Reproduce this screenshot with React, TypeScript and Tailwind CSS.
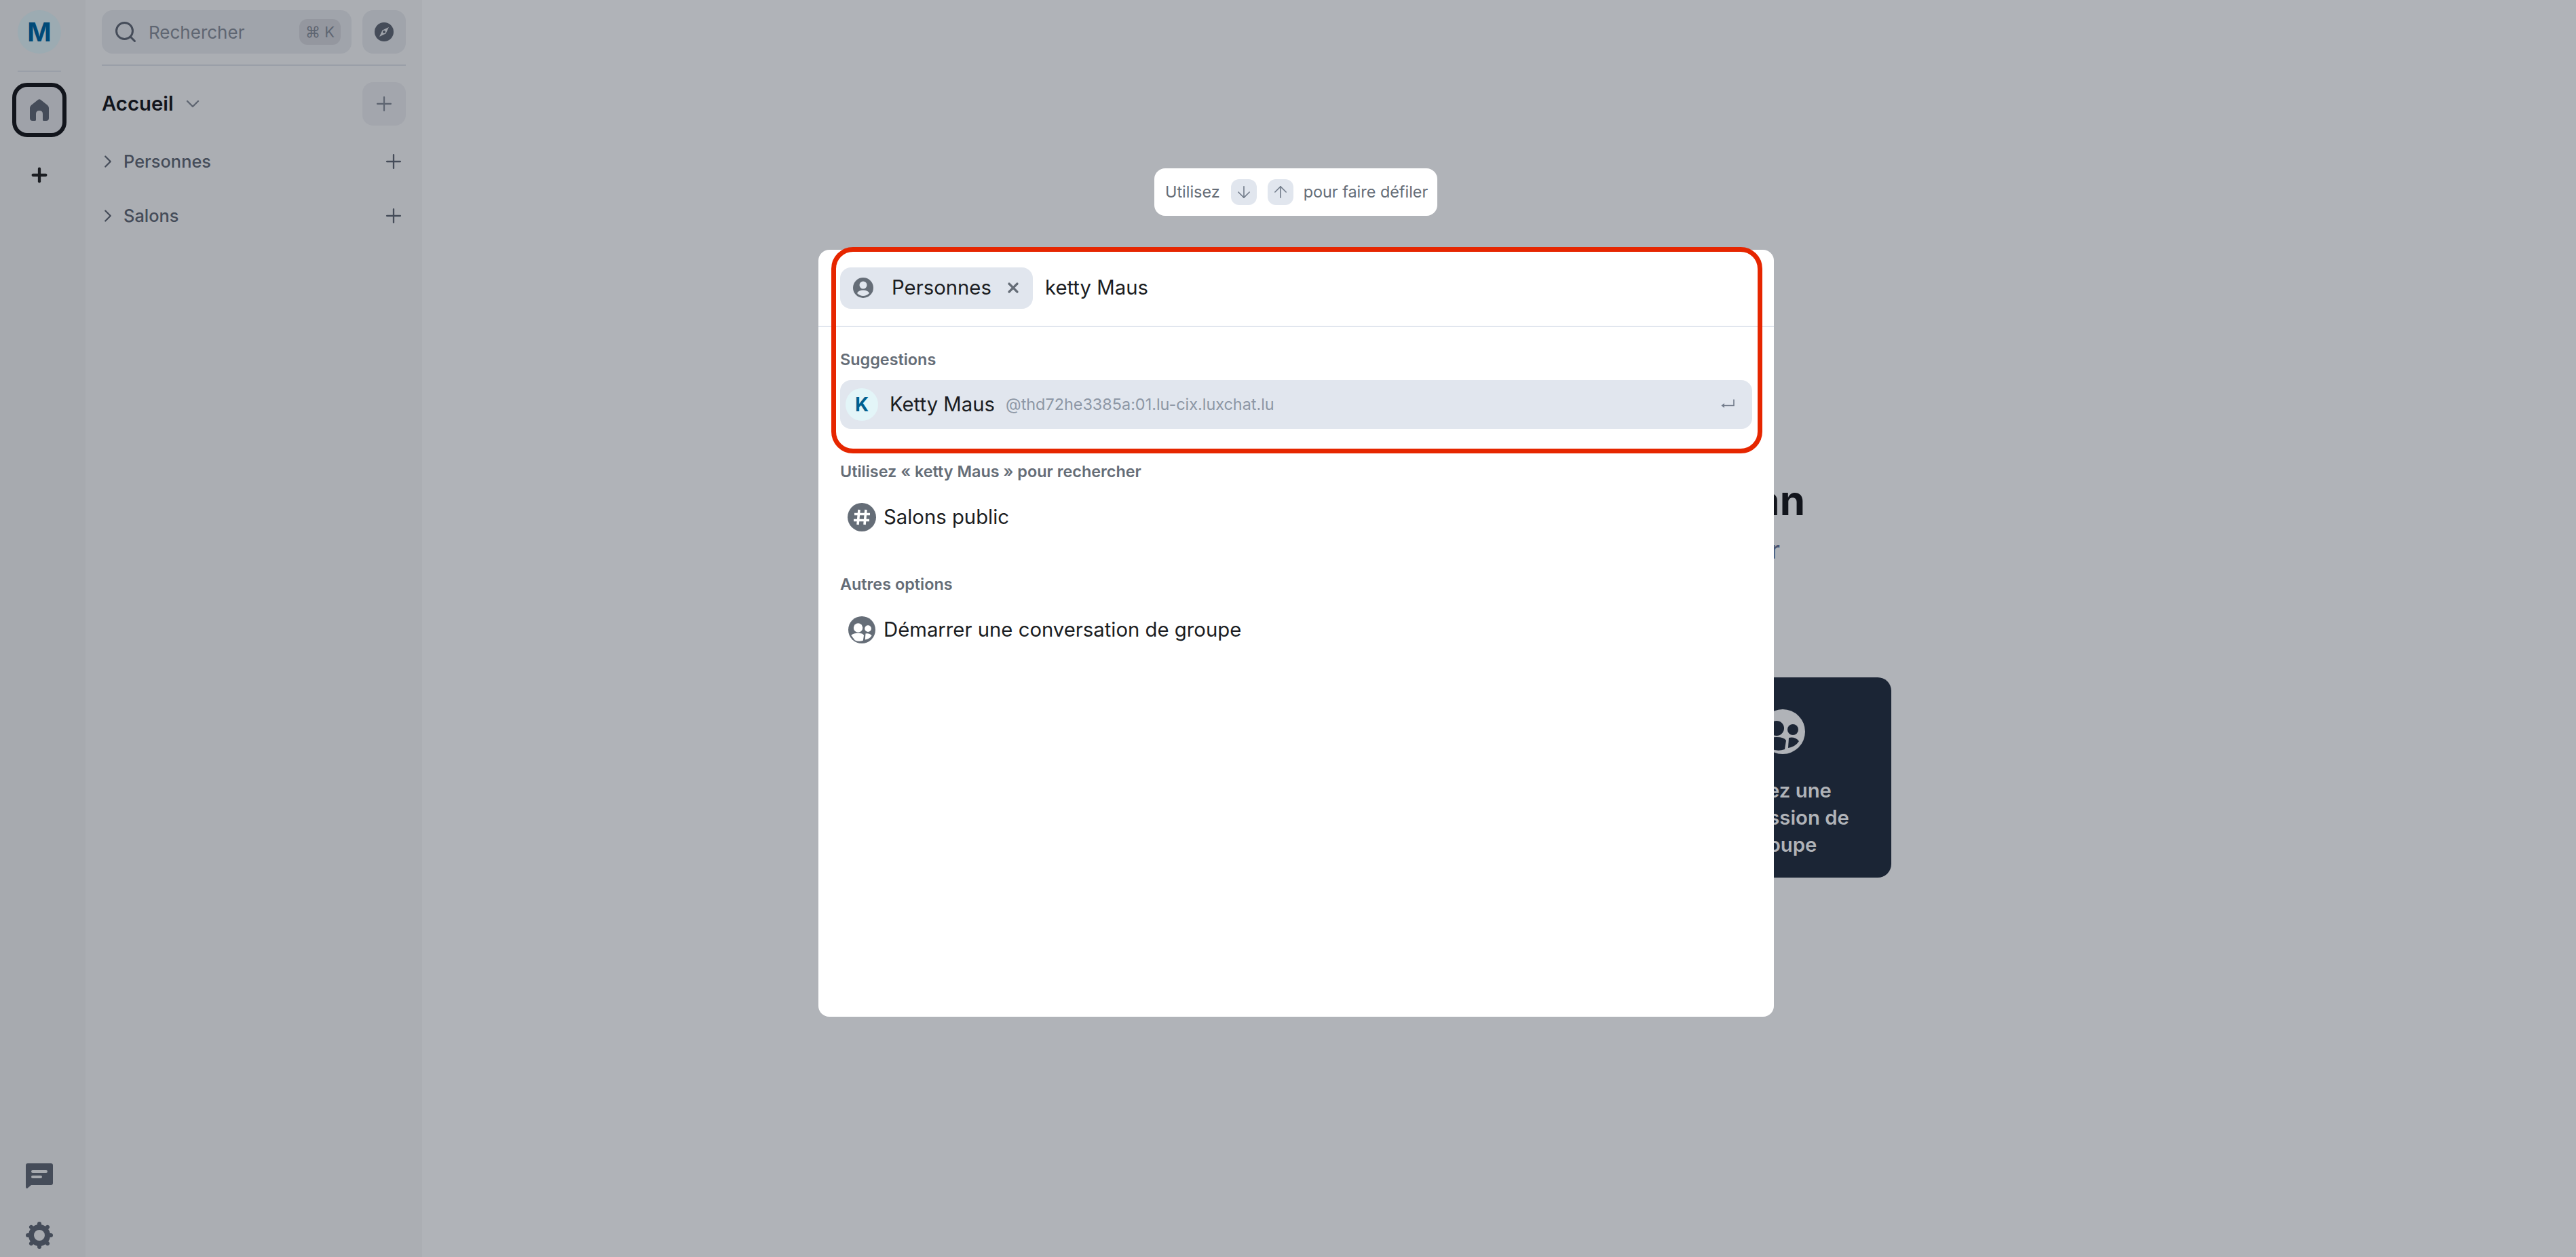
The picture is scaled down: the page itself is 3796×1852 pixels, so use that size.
import { ArrowDown, ArrowUp, ChevronDown, ChevronRight, Plus, Search, X } from "lucide-react";

function HomeIcon() {
  return (
    <svg viewBox="0 0 28 32" className="h-8 w-7 fill-[#454c59]">
      <path d="M12 1 Q14 -0.5 16 1 L26 9 Q28 11 28 13 V28 Q28 32 24 32 H20 Q19 32 19 30 V22 Q19 17 14 17 Q9 17 9 22 V30 Q9 32 8 32 H4 Q0 32 0 28 V13 Q0 11 2 9 Z" />
    </svg>
  );
}

function CompassIcon() {
  return (
    <svg viewBox="0 0 28 28" className="h-7 w-7">
      <circle cx="14" cy="14" r="14" fill="#454c59" />
      <path d="M21 7 L16.5 16.5 L7 21 L11.5 11.5 Z" fill="#a0a4ab" />
      <circle cx="14" cy="14" r="2" fill="#454c59" />
    </svg>
  );
}

function ChatIcon() {
  return (
    <svg viewBox="0 0 40 37" className="h-[37px] w-10">
      <path d="M3 0 H37 Q40 0 40 3 V29 Q40 32 37 32 H8 L2 37 Q0 37 0 35 V3 Q0 0 3 0 Z" fill="#454c59" />
      <rect x="8" y="10" width="24" height="4" rx="2" fill="#a7aaaf" />
      <rect x="8" y="18" width="16" height="4" rx="2" fill="#a7aaaf" />
    </svg>
  );
}

function GearIcon() {
  const angles = [0, 45, 90, 135, 180, 225, 270, 315];
  return (
    <svg viewBox="0 0 40 40" className="h-10 w-10">
      <circle cx="20" cy="20" r="12" fill="none" stroke="#454c59" strokeWidth="8" />
      {angles.map((a) => (
        <line key={a} x1="20" y1="6" x2="20" y2="3" stroke="#454c59" strokeWidth="6" strokeLinecap="round" transform={`rotate(${a} 20 20)`} />
      ))}
    </svg>
  );
}

function PersonIcon() {
  return (
    <svg viewBox="0 0 30 30" className="h-[30px] w-[30px]">
      <circle cx="15" cy="15" r="15" fill="#656d77" />
      <circle cx="15" cy="11" r="5.5" fill="#e1e6ee" />
      <path d="M6 23 Q8 18.5 15 18.5 Q22 18.5 24 23 Q20 27 15 27 Q10 27 6 23 Z" fill="#e1e6ee" />
    </svg>
  );
}

function HashIcon() {
  return (
    <svg viewBox="0 0 42 42" className="h-[42px] w-[42px]">
      <circle cx="21" cy="21" r="21" fill="#656d77" />
      <path d="M17 10 L15 32 M27 10 L25 32 M10 16.5 H33 M9 25.5 H32" stroke="#fff" strokeWidth="3.6" fill="none" />
    </svg>
  );
}

function GroupIcon({ cut, className }: { cut: string; className: string }) {
  return (
    <svg viewBox="-33 -33 66 66" className={className}>
      <circle cx="0" cy="0" r="33" fill={cut === "#1b2535" ? "#b0b3b8" : "#656d77"} />
      <circle cx="-9" cy="-5" r="11" fill={cut} />
      <circle cx="15" cy="-3" r="8" fill={cut} />
      <path d="M-26 13 Q-20 8 -9 8 Q2 8 5 13 L3 26 Q-8 30 -17 25 Z" fill={cut} />
      <path d="M8 24 L9 9 Q18 7 24 14 Q19 22 8 24 Z" fill={cut} />
    </svg>
  );
}

function EnterIcon() {
  return (
    <svg viewBox="0 0 20 16" className="h-4 w-5" fill="none">
      <path d="M19 0.5 V9.5 H4" stroke="#737d8c" strokeWidth="1.6" />
      <path d="M0.5 9.5 L5 6 V13 Z" fill="#737d8c" />
    </svg>
  );
}

function SectionRow({ label }: { label: string }) {
  return (
    <div className="flex h-20 items-center text-[#454c59]">
      <ChevronRight size={30} strokeWidth={1.8} className="-ml-1.5" />
      <span className="ml-2 flex-1 text-[25.4px] font-medium">{label}</span>
      <Plus size={34} strokeWidth={1.6} className="mr-px" />
    </div>
  );
}

function SectionLabel({ children }: { children: string }) {
  return <div className="text-[23.4px] leading-8 font-semibold text-[#656d77]">{children}</div>;
}

function OptionRow({ icon, label }: { icon: React.ReactNode; label: string }) {
  return (
    <div className="mt-[23px] flex h-[56px] items-center pl-[11px]">
      <span className="flex w-[42px] justify-center">{icon}</span>
      <span className="ml-[11px] text-[29.3px] text-[#1b1d22]">{label}</span>
    </div>
  );
}

export default function App() {
  return (
    <div className="relative flex h-[1852px] w-[3796px] overflow-hidden bg-[#b0b3b8] font-['Inter',sans-serif]">
      {/* Rail */}
      <aside className="flex w-[126px] shrink-0 flex-col items-center bg-[#a7aaaf] pt-[15px] pr-[10px]">
        <div className="flex h-16 w-16 items-center justify-center rounded-full bg-[#9cabb2] text-[38px] font-bold text-[#004a78]">M</div>
        <div className="mt-[25px] h-0.5 w-16 bg-[#9a9fa8]" />
        <div className="mt-4 flex h-20 w-20 items-center justify-center rounded-[22px] border-[6px] border-[#12151c] bg-[#9fa2a9]">
          <HomeIcon />
        </div>
        <Plus size={32} strokeWidth={3.2} className="mt-[40px] text-[#1b1d22]" />
        <div className="mt-auto flex flex-col items-center gap-[49px] pb-3">
          <ChatIcon />
          <GearIcon />
        </div>
      </aside>

      {/* Room list */}
      <aside className="w-[496px] shrink-0 bg-[#abaeb3] px-6 pt-[15px]">
        <div className="flex gap-4">
          <div className="flex h-16 flex-1 items-center rounded-2xl bg-[#a0a4ab] pr-[16px] pl-[17px]">
            <Search size={36} strokeWidth={2} className="text-[#454c59]" />
            <span className="ml-[16px] flex-1 text-[26px] text-[#5f6672]">Rechercher</span>
            <span className="flex h-[38px] w-[61px] items-center justify-center rounded-xl bg-[#94979f] text-[22px] text-[#5f6672]">⌘ K</span>
          </div>
          <div className="flex h-16 w-16 items-center justify-center rounded-2xl bg-[#a0a4ab]">
            <CompassIcon />
          </div>
        </div>
        <div className="mt-4 h-0.5 bg-[#9a9fa8]" />
        <div className="mt-6 flex h-16 items-center">
          <span className="text-[29.3px] font-semibold text-[#12151c]">Accueil</span>
          <ChevronDown size={32} strokeWidth={1.8} className="ml-[12px] text-[#5f6672]" />
          <div className="ml-auto flex h-16 w-16 items-center justify-center rounded-2xl bg-[#a3a6ad] text-[#5f6672]">
            <Plus size={34} strokeWidth={1.6} />
          </div>
        </div>
        <div className="mt-[13px]">
          <SectionRow label="Personnes" />
          <SectionRow label="Salons" />
        </div>
      </aside>

      {/* Home page behind the dialog */}
      <main className="flex flex-1 flex-col items-center pt-[702px]">
        <h1 className="w-[902px] text-right text-[60px] leading-[70px] font-bold whitespace-nowrap text-[#12151c]">Bienvenue Jean</h1>
        <p className="mt-[13px] w-[828px] text-right text-[36px] leading-[50px] font-medium whitespace-nowrap text-[#4a5470]">Maintenant, aidons-vous à démarrer</p>
        <div className="mt-[163px] flex w-[1156px] justify-between">
          <div className="w-[320px]" />
          <div className="w-[320px]" />
          <div className="flex h-[295px] w-[320px] flex-col items-center rounded-[20px] bg-[#1b2535] pt-[47px] text-center">
            <GroupIcon cut="#1b2535" className="h-[66px] w-[66px]" />
            <div className="mt-[34px] w-[240px] text-[29.3px] leading-10 font-semibold text-[#b0b3b8]">Créez une discussion de groupe</div>
          </div>
        </div>
      </main>

      {/* Scroll hint */}
      <div className="absolute top-[248px] left-[1701px] flex h-[70px] w-[417px] items-center rounded-2xl bg-white pl-4 text-[23.4px] text-[#656d77]">
        Utilisez
        <span className="mr-4 ml-4 flex h-[38px] w-[38px] items-center justify-center rounded-xl bg-[#e1e6ee]">
          <ArrowDown size={28} strokeWidth={1.4} className="text-[#737d8c]" />
        </span>
        <span className="mr-[15px] flex h-[38px] w-[38px] items-center justify-center rounded-xl bg-[#e1e6ee]">
          <ArrowUp size={28} strokeWidth={1.4} className="text-[#737d8c]" />
        </span>
        pour faire défiler
      </div>

      {/* Spotlight dialog */}
      <div className="absolute top-[368px] left-[1206px] h-[1130px] w-[1408px] rounded-2xl bg-white">
        <div className="flex h-[114px] items-center border-b-2 border-[#e1e6ee] pl-8">
          <div className="flex h-[61px] w-[284px] items-center rounded-2xl bg-[#e1e6ee] pl-[19px]">
            <PersonIcon />
            <span className="ml-[27px] text-[29.3px] text-[#1b1d22]">Personnes</span>
            <X size={24} strokeWidth={3.2} className="ml-[20px] text-[#656d77]" />
          </div>
          <span className="ml-[18px] text-[29.3px] text-[#1b1d22]">ketty Maus</span>
        </div>
        <div className="px-8 pt-[32px]">
          <SectionLabel>Suggestions</SectionLabel>
          <div className="mt-[14px] flex h-[72px] w-[1344px] items-center rounded-2xl bg-[#e1e6ee] pr-[26px] pl-2">
            <div className="flex h-12 w-12 items-center justify-center rounded-full bg-[#e3f5f8] text-[28px] font-bold text-[#005f8f]">K</div>
            <span className="ml-[17px] text-[29.3px] text-[#1b1d22]">Ketty Maus</span>
            <span className="ml-4 flex-1 text-[23.4px] text-[#8d97a5]">@thd72he3385a:01.lu-cix.luxchat.lu</span>
            <EnterIcon />
          </div>
          <div className="mt-[47px]">
            <SectionLabel>Utilisez « ketty Maus » pour rechercher</SectionLabel>
          </div>
          <OptionRow icon={<HashIcon />} label="Salons public" />
          <div className="mt-[55px]">
            <SectionLabel>Autres options</SectionLabel>
          </div>
          <OptionRow icon={<GroupIcon cut="#ffffff" className="h-10 w-10" />} label="Démarrer une conversation de groupe" />
        </div>
      </div>

      {/* Annotation drawn over the screenshot */}
      <div className="absolute top-[364px] left-[1225px] h-[304px] w-[1372px] rounded-[32px] border-[7px] border-[#e62600]" />
    </div>
  );
}
